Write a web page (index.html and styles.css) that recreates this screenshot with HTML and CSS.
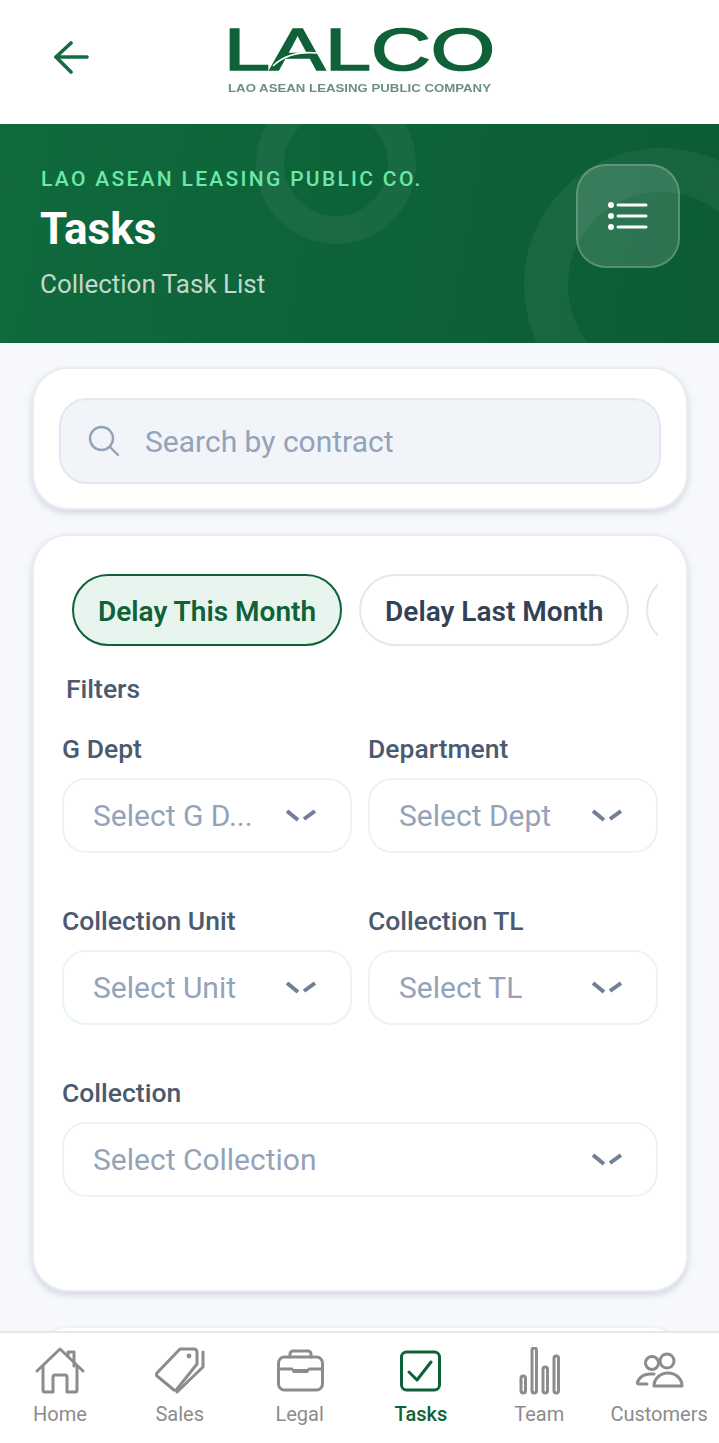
FILE: index.html
```html
<!DOCTYPE html>
<html lang="en">
<head>
    <meta charset="UTF-8">
    <meta name="viewport" content="width=device-width, initial-scale=1.0">
    <title>LALCO - Tasks</title>
    <link rel="stylesheet" href="styles.css">
</head>
<body>
    <div class="app">
        <header class="topbar">
            <svg class="back-icon" viewBox="0 0 36 36" fill="none" stroke="#146c43" stroke-width="3.6" stroke-linecap="round" stroke-linejoin="round">
                <path d="M33 17H2"/>
                <path d="M17 3 2 17l15 15"/>
            </svg>
            <svg class="logo" viewBox="0 -14 272 84">
                <text class="logo-main" x="0" y="44" textLength="271" lengthAdjust="spacingAndGlyphs">LALCO</text>
                <path class="logo-swoosh" d="M49 40C59 30 72 25 94 27"/>
                <text class="logo-sub" x="4" y="66" textLength="263" lengthAdjust="spacingAndGlyphs">LAO ASEAN LEASING PUBLIC COMPANY</text>
            </svg>
        </header>

        <section class="hero">
            <div class="ring ring-small"></div>
            <div class="ring ring-large"></div>
            <div class="hero-text">
                <div class="hero-eyebrow">LAO ASEAN LEASING PUBLIC CO.</div>
                <h1 class="hero-title">Tasks</h1>
                <div class="hero-sub">Collection Task List</div>
            </div>
            <div class="menu-btn">
                <svg viewBox="0 0 40 28" fill="none" stroke="#fff" stroke-width="3" stroke-linecap="round">
                    <path d="M10 3h28M10 14h28M10 25h28"/>
                    <circle cx="3" cy="3" r="3" fill="#fff" stroke="none"/>
                    <circle cx="3" cy="14" r="3" fill="#fff" stroke="none"/>
                    <circle cx="3" cy="25" r="3" fill="#fff" stroke="none"/>
                </svg>
            </div>
        </section>

        <main class="content">
            <div class="card search-card">
                <div class="search-box">
                    <svg class="search-icon" viewBox="0 0 32 32" fill="none" stroke="#94a3b8" stroke-width="2.4" stroke-linecap="round">
                        <circle cx="13.5" cy="13.5" r="11.5"/>
                        <path d="m22 22 8 8"/>
                    </svg>
                    <span class="search-text">Search by contract</span>
                </div>
            </div>

            <div class="card filter-card">
                <div class="tabs">
                    <div class="tab active">Delay This Month</div>
                    <div class="tab">Delay Last Month</div>
                    <div class="tab tab-more"></div>
                </div>
                <div class="filters-title">Filters</div>
                <div class="filter-grid">
                    <div class="field">
                        <label class="field-label">G Dept</label>
                        <div class="select"><span class="select-text">Select G D...</span><svg class="chevron" viewBox="0 0 30 14"><path d="M1 2l11 9"/><path d="M18 10 29 2"/></svg></div>
                    </div>
                    <div class="field">
                        <label class="field-label">Department</label>
                        <div class="select"><span class="select-text">Select Dept</span><svg class="chevron" viewBox="0 0 30 14"><path d="M1 2l11 9"/><path d="M18 10 29 2"/></svg></div>
                    </div>
                    <div class="field">
                        <label class="field-label">Collection Unit</label>
                        <div class="select"><span class="select-text">Select Unit</span><svg class="chevron" viewBox="0 0 30 14"><path d="M1 2l11 9"/><path d="M18 10 29 2"/></svg></div>
                    </div>
                    <div class="field">
                        <label class="field-label">Collection TL</label>
                        <div class="select"><span class="select-text">Select TL</span><svg class="chevron" viewBox="0 0 30 14"><path d="M1 2l11 9"/><path d="M18 10 29 2"/></svg></div>
                    </div>
                    <div class="field field-wide">
                        <label class="field-label">Collection</label>
                        <div class="select"><span class="select-text">Select Collection</span><svg class="chevron" viewBox="0 0 30 14"><path d="M1 2l11 9"/><path d="M18 10 29 2"/></svg></div>
                    </div>
                </div>
            </div>

            <div class="card peek-card"></div>
        </main>

        <nav class="bottom-nav">
            <div class="nav-item">
                <svg class="nav-icon" viewBox="0 0 50 50">
                    <path d="M2 24 25 2l23 22"/>
                    <path d="M8 19v24a2 2 0 0 0 2 2h8V30a2 2 0 0 1 2-2h10a2 2 0 0 1 2 2v15h8a2 2 0 0 0 2-2V19"/>
                    <path d="M33 9V5h6v14"/>
                </svg>
                <span>Home</span>
            </div>
            <div class="nav-item">
                <svg class="nav-icon" viewBox="0 0 50 50">
                    <path d="M25 2h14a3 3 0 0 1 3 3v12L22 42a2 2 0 0 1-3 1L2 29a2 2 0 0 1 0-3z"/>
                    <circle class="icon-dot" cx="34" cy="9" r="2.4"/>
                    <path d="M48 5v15L22 45"/>
                </svg>
                <span>Sales</span>
            </div>
            <div class="nav-item">
                <svg class="nav-icon" viewBox="0 0 50 50">
                    <rect x="3.5" y="10" width="44" height="33" rx="6"/>
                    <path d="M15 10V7a3 3 0 0 1 3-3h15a3 3 0 0 1 3 3v3"/>
                    <path d="M3.5 22H17M34 22h13.500"/>
                    <path class="icon-dot" d="M17 22h17v2a2 2 0 0 1-2 2H19a2 2 0 0 1-2-2z"/>
                </svg>
                <span>Legal</span>
            </div>
            <div class="nav-item active">
                <svg class="nav-icon" viewBox="0 0 50 50">
                    <rect x="5.500" y="5" width="38" height="38" rx="5"/>
                    <path d="M13 25l8 8 14-18"/>
                </svg>
                <span>Tasks</span>
            </div>
            <div class="nav-item">
                <svg class="nav-icon" viewBox="0 0 50 50">
                    <rect x="7" y="29" width="4.500" height="17" rx="2.200"/>
                    <rect x="18" y="1" width="4.500" height="45" rx="2.200"/>
                    <rect x="29" y="20" width="4.500" height="26" rx="2.200"/>
                    <rect x="40" y="9" width="4.500" height="37" rx="2.200"/>
                </svg>
                <span>Team</span>
            </div>
            <div class="nav-item">
                <svg class="nav-icon" viewBox="0 0 50 50">
                    <circle cx="18" cy="16" r="6.500"/>
                    <circle cx="33" cy="14" r="7"/>
                    <path d="M20 39c0-8 7-13 14-13s14 5 14 13z"/>
                    <path d="M13 37H5c-2 0-2-2-1-3 2-4 6-7 12-7h4"/>
                </svg>
                <span>Customers</span>
            </div>
        </nav>
    </div>
</body>
</html>
```

FILE: styles.css
```css
* {
    margin: 0;
    padding: 0;
    box-sizing: border-box;
}

body {
    font-family: Roboto, 'Liberation Sans', sans-serif;
    background: #f6f8fb;
}

.app {
    width: 719px;
    height: 1443px;
    display: flex;
    flex-direction: column;
    overflow: hidden;
}

/* top bar */
.topbar {
    height: 124px;
    flex: none;
    background: white;
    display: flex;
    align-items: flex-start;
    padding: 12px 0 0 54px;
}

.back-icon {
    width: 36px;
    height: 36px;
    margin-top: 28px;
}

.logo {
    width: 272px;
    height: 84px;
    margin-left: 134px;
    filter: blur(0.4px);
}

.logo-main {
    font-family: 'Liberation Sans', sans-serif;
    font-size: 60px;
    fill: #0f6138;
    stroke: #0f6138;
    stroke-width: 1.6;
}

.logo-swoosh {
    fill: none;
    stroke: white;
    stroke-width: 1.6;
}

.logo-sub {
    font-family: 'Liberation Sans', sans-serif;
    font-size: 11px;
    font-weight: 700;
    fill: #6d8f7d;
}

/* hero */
.hero {
    height: 219px;
    flex: none;
    position: relative;
    overflow: hidden;
    background: linear-gradient(100deg, #0f6a3c 0%, #0b5c34 100%);
    display: flex;
    justify-content: space-between;
    padding: 40px 39px 0 41px;
}

.ring {
    position: absolute;
    border-radius: 50%;
    border-style: solid;
    border-color: rgba(255, 255, 255, 0.05);
}

.ring-small {
    width: 160px;
    height: 160px;
    left: 256px;
    top: -40px;
    border-width: 28px;
}

.ring-large {
    width: 274px;
    height: 274px;
    left: 524px;
    top: 24px;
    border-width: 44px;
}

.hero-text {
    position: relative;
}

.hero-eyebrow {
    font-size: 21px;
    font-weight: 500;
    letter-spacing: 2.3px;
    color: #6ee7a8;
    line-height: 30px;
}

.hero-title {
    font-size: 44px;
    font-weight: 700;
    color: white;
    line-height: 50px;
    margin: 10px 0 0 -1px;
}

.hero-sub {
    font-size: 26px;
    color: rgba(255, 255, 255, 0.75);
    line-height: 30px;
    margin: 15px 0 0 -1px;
}

.menu-btn {
    position: relative;
    width: 104px;
    height: 104px;
    border-radius: 30px;
    background: rgba(255, 255, 255, 0.14);
    border: 2px solid rgba(255, 255, 255, 0.2);
    display: flex;
    align-items: center;
    justify-content: center;
}

.menu-btn svg {
    width: 40px;
    height: 28px;
}

/* content */
.content {
    flex: 1;
    min-height: 0;
    overflow: hidden;
    padding: 24px 31px 0 32px;
}

.card {
    background: white;
    border-radius: 36px;
    border: 2px solid #e9edf2;
    box-shadow: 0 3px 6px rgba(100, 116, 139, 0.25);
}

.search-card {
    height: 143px;
    padding: 29px 25px 0 25px;
}

.search-box {
    height: 86px;
    background: #f1f4f9;
    border: 2px solid #e2e8f0;
    border-radius: 28px;
    display: flex;
    align-items: center;
    padding-left: 27px;
}

.search-icon {
    width: 32px;
    height: 32px;
    flex: none;
}

.search-text {
    font-size: 30px;
    color: #94a3b8;
    margin-left: 25px;
}

.filter-card {
    height: 758px;
    margin-top: 24px;
    padding: 38px 28px 0 28px;
}

.tabs {
    display: flex;
    gap: 17px;
    overflow: hidden;
    margin-left: 10px;
}

.tab {
    height: 72px;
    flex: none;
    display: flex;
    align-items: center;
    padding: 3px 24px 0;
    border: 2px solid #e5e7eb;
    border-radius: 36px;
    font-size: 28px;
    font-weight: 600;
    color: #334155;
}

.tab.active {
    background: #e8f4ee;
    border-color: #0f6138;
    color: #0f6138;
}

.tab-more {
    width: 100px;
}

.filters-title {
    font-size: 26.500px;
    font-weight: 500;
    color: #4b5a6e;
    line-height: 30px;
    margin: 28px 0 0 4px;
}

.filter-grid {
    display: grid;
    grid-template-columns: 290px 290px;
    column-gap: 16px;
    row-gap: 53px;
    margin-top: 30px;
}

.field-wide {
    grid-column: 1 / 3;
}

.field-label {
    display: block;
    font-size: 26.500px;
    font-weight: 500;
    color: #4b5a6e;
    line-height: 30px;
    margin-bottom: 14px;
}

.select {
    height: 75px;
    border: 2px solid #e9f5f1;
    border-radius: 24px;
    display: flex;
    align-items: center;
    justify-content: space-between;
    padding: 0 34px 0 29px;
}

.select-text {
    font-size: 30px;
    color: #94a3b8;
}

.chevron {
    width: 30px;
    height: 14px;
    flex: none;
    fill: none;
    stroke: #718096;
    stroke-width: 4;
}

.peek-card {
    height: 100px;
    margin-top: 34px;
    border-color: #eef1f5;
    box-shadow: none;
}

/* bottom nav */
.bottom-nav {
    height: 112px;
    flex: none;
    background: white;
    border-top: 2px solid #e5e7eb;
    display: grid;
    grid-template-columns: repeat(6, 1fr);
}

.nav-item {
    display: flex;
    flex-direction: column;
    align-items: center;
    padding-top: 14px;
    font-size: 20px;
    line-height: 24px;
    color: #8c8c8c;
}

.nav-item span {
    margin-top: 5px;
}

.nav-icon {
    width: 50px;
    height: 50px;
    fill: none;
    stroke: #8c8c8c;
    stroke-width: 3;
    stroke-linecap: round;
    stroke-linejoin: round;
}

.icon-dot {
    fill: #8c8c8c;
    stroke: none;
}

.nav-item.active {
    color: #0f6138;
    font-weight: 500;
    padding-left: 3px;
}

.nav-item.active .nav-icon {
    stroke: #0f6138;
}
```
